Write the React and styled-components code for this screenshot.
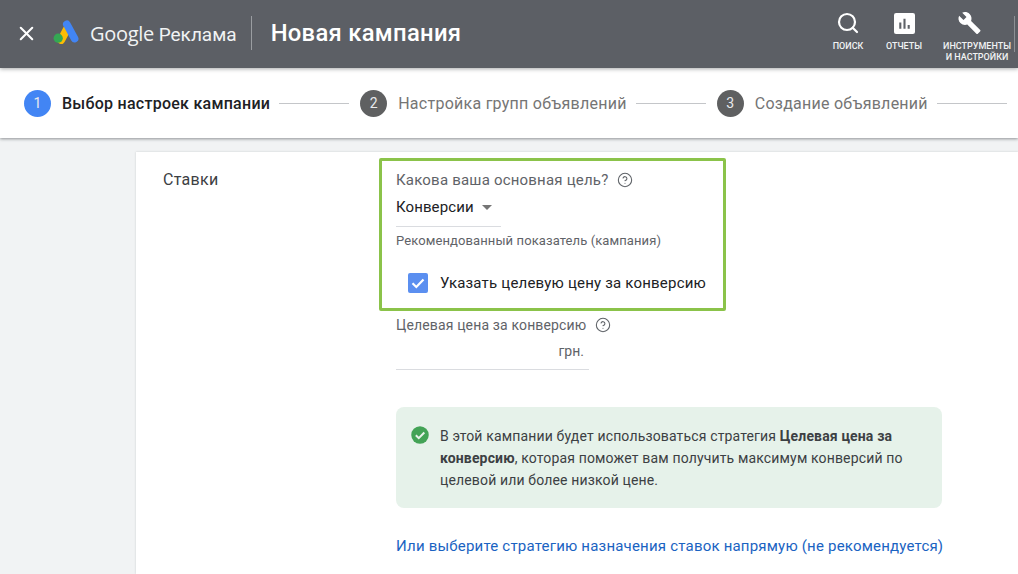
import React from "react";
import styled, { createGlobalStyle } from "styled-components";
import { X, Search, HelpCircle } from "lucide-react";

const steps = [
  { n: 1, label: "Выбор настроек кампании", active: true },
  { n: 2, label: "Настройка групп объявлений" },
  { n: 3, label: "Создание объявлений" },
];

function App() {
  return (
    <Page>
      <GlobalStyle />
      <Header>
        <CloseIcon size={23} strokeWidth={2.2} color="#fff" />
        <Logo viewBox="0 0 26 24">
          <path d="M8.200 20 14.500 8" stroke="#fbbc04" strokeWidth="8" strokeLinecap="round" />
          <path d="M13.800 4.300 21.600 18.600" stroke="#4285f4" strokeWidth="7.600" strokeLinecap="round" />
          <circle cx="5.200" cy="18.200" r="4.600" fill="#34a853" />
        </Logo>
        <Brand>
          <BrandGoogle>Google</BrandGoogle> Реклама
        </Brand>
        <HeaderDivider />
        <Title>Новая кампания</Title>
        <HeaderActions>
          <Action $width="44px" $gap="12px">
            <Search size={24} strokeWidth={2.2} color="#fff" />
            <ActionLabel>ПОИСК</ActionLabel>
          </Action>
          <Action $width="46px" $gap="11px">
            <ReportIcon viewBox="0 0 20 20">
              <rect width="20" height="20" rx="2" fill="#fff" />
              <path d="M5 9h2v6H5zM9 5.500h2V15H9zM13 11.500h2V15h-2z" fill="#5f6368" />
            </ReportIcon>
            <ActionLabel>ОТЧЕТЫ</ActionLabel>
          </Action>
          <Action $width="70px" $gap="15px">
            <WrenchIcon viewBox="0 0 24 24">
              <path
                d="M22.700 19 13.600 9.900c.9-2.300.4-5-1.500-6.900-2-2-5-2.400-7.400-1.300L9 6 6 9 1.600 4.700C.4 7.100.9 10.100 2.900 12.100c1.900 1.900 4.600 2.400 6.900 1.500l9.100 9.100c.4.400 1 .4 1.400 0l2.300-2.300c.5-.4.5-1.100.1-1.400z"
                fill="#fff"
              />
            </WrenchIcon>
            <ActionLabel>
              ИНСТРУМЕНТЫ
              <br />И НАСТРОЙКИ
            </ActionLabel>
          </Action>
          <ActionsEdge />
        </HeaderActions>
      </Header>

      <Stepper>
        {steps.map((step) => (
          <Step key={step.n}>
            <StepNumber $active={step.active}>{step.n}</StepNumber>
            <StepLabel $active={step.active}>{step.label}</StepLabel>
            <StepLine />
          </Step>
        ))}
      </Stepper>

      <Content>
        <Card>
          <SectionName>Ставки</SectionName>
          <FormColumn>
            <Highlight>
              <FieldLabel>
                Какова ваша основная цель?
                <HelpIcon size={16} strokeWidth={1.6} />
              </FieldLabel>
              <Select>
                Конверсии
                <Caret />
              </Select>
              <Hint>Рекомендованный показатель (кампания)</Hint>
              <CheckRow>
                <CheckBox>
                  <svg viewBox="0 0 20 20" width="20" height="20">
                    <path d="M4.500 10.300 8.300 14 15.500 6.500" fill="none" stroke="#fff" strokeWidth="2.200" />
                  </svg>
                </CheckBox>
                Указать целевую цену за конверсию
              </CheckRow>
            </Highlight>

            <Indented>
              <TargetLabel>
                Целевая цена за конверсию
                <HelpIcon size={16} strokeWidth={1.6} />
              </TargetLabel>
              <PriceInput>грн.</PriceInput>
              <Notice>
                <NoticeIcon viewBox="0 0 24 24">
                  <circle cx="12" cy="12" r="10.500" fill="#43a356" />
                  <path d="M7 12.300 10.500 15.800 17.200 9" fill="none" stroke="#e8f2ea" strokeWidth="2.400" />
                </NoticeIcon>
                <NoticeText>
                  В этой кампании будет использоваться стратегия <b>Целевая цена за конверсию</b>, которая поможет вам
                  получить максимум конверсий по целевой или более низкой цене.
                </NoticeText>
              </Notice>
              <StrategyLink>Или выберите стратегию назначения ставок напрямую (не рекомендуется)</StrategyLink>
            </Indented>
          </FormColumn>
        </Card>
      </Content>
    </Page>
  );
}

export default App;

const GlobalStyle = createGlobalStyle`
  html, body {
    margin: 0;
    padding: 0;
    height: 100%;
    overflow: hidden;
  }
  body {
    font-family: Roboto, "Liberation Sans", sans-serif;
    background: #f1f3f4;
  }
`;

const Page = styled.div`
  width: 1018px;
  height: 574px;
  overflow: hidden;
  display: flex;
  flex-direction: column;
  background: #f1f3f4;
`;

const Header = styled.header`
  height: 68px;
  box-sizing: border-box;
  padding: 0 0 2px 15px;
  flex: none;
  display: flex;
  align-items: center;
  background: #5c5f65;
  color: #fff;
  position: relative;
  z-index: 2;
  box-shadow: 0 1px 4px rgba(60, 64, 67, 0.45);
`;

const CloseIcon = styled(X)`
  flex: none;
`;

const Logo = styled.svg`
  width: 26px;
  height: 24px;
  margin: -2px 0 0 15px;
  flex: none;
`;

const Brand = styled.div`
  margin-left: 11px;
  font-size: 19px;
  color: #f1f3f4;
  white-space: nowrap;
`;

const BrandGoogle = styled.span`
  font-family: "Open Sans", sans-serif;
  font-size: 20px;
  letter-spacing: -0.3px;
`;

const HeaderDivider = styled.div`
  width: 1px;
  height: 34px;
  margin: 0 19px 0 14px;
  background: #9a9da1;
`;

const Title = styled.h1`
  margin: 0;
  font-size: 23.800px;
  font-weight: 500;
  letter-spacing: 0.3px;
  white-space: nowrap;
`;

const HeaderActions = styled.div`
  margin-left: auto;
  align-self: flex-start;
  display: flex;
  align-items: flex-start;
`;

const Action = styled.div`
  width: ${(p) => p.$width};
  margin-left: ${(p) => p.$gap};
  padding-top: 11px;
  display: flex;
  flex-direction: column;
  align-items: center;
`;

const ReportIcon = styled.svg`
  width: 21px;
  height: 21px;
  margin: 2px 0 1px;
`;

const WrenchIcon = styled.svg`
  width: 27px;
  height: 24px;
  margin-right: 16px;
`;

const ActionLabel = styled.div`
  margin-top: 6px;
  font-size: 9px;
  line-height: 11px;
  font-weight: 500;
  text-align: center;
  color: #f1f3f4;
  white-space: nowrap;
`;

const ActionsEdge = styled.div`
  width: 1px;
  height: 36px;
  margin: 16px 3px 0 2px;
  background: #8d9094;
`;

const Stepper = styled.nav`
  height: 70px;
  flex: none;
  display: flex;
  align-items: center;
  padding-left: 24px;
  background: #fff;
  position: relative;
  z-index: 1;
  box-shadow: 0 1px 3px rgba(60, 64, 67, 0.55);
`;

const Step = styled.div`
  display: flex;
  align-items: center;
  margin-right: 11px;
`;

const StepNumber = styled.div`
  width: 27px;
  height: 27px;
  border-radius: 50%;
  display: flex;
  align-items: center;
  justify-content: center;
  font-size: 14px;
  color: #e8eaed;
  background: ${(p) => (p.$active ? "#4285f4" : "#5f6061")};
`;

const StepLabel = styled.div`
  margin-left: 11px;
  font-size: 16px;
  letter-spacing: 0.26px;
  white-space: nowrap;
  font-weight: ${(p) => (p.$active ? 500 : 400)};
  color: ${(p) => (p.$active ? "#202124" : "#757575")};
`;

const StepLine = styled.div`
  width: 70px;
  height: 1px;
  margin-left: 9px;
  background: #c4c6c9;
`;

const Content = styled.main`
  flex: 1;
  min-height: 0;
  padding: 14px 0 0 136px;
`;

const Card = styled.section`
  height: 100%;
  display: grid;
  grid-template-columns: 243px 1fr;
  align-items: start;
  background: #fff;
  box-shadow: 0 0 2px rgba(60, 64, 67, 0.2);
`;

const SectionName = styled.div`
  padding: 18px 0 0 27px;
  font-size: 16px;
  letter-spacing: 0.3px;
  color: #3c4043;
`;

const FormColumn = styled.div`
  padding-top: 6px;
`;

const Highlight = styled.div`
  width: 347px;
  height: 153px;
  box-sizing: border-box;
  border: 3px solid #8bc34a;
  border-radius: 2px;
  padding: 9px 0 0 14px;
`;

const FieldLabel = styled.div`
  display: flex;
  align-items: center;
  gap: 9px;
  font-size: 15px;
  line-height: 20px;
  letter-spacing: 0.2px;
  color: #5f6368;
`;

const HelpIcon = styled(HelpCircle)`
  color: #5f6368;
  flex: none;
`;

const Select = styled.div`
  width: 105px;
  height: 34px;
  box-sizing: border-box;
  margin-top: 3px;
  padding-top: 4px;
  display: flex;
  align-items: flex-start;
  gap: 8px;
  font-size: 15px;
  line-height: 20px;
  letter-spacing: 0.1px;
  color: #202124;
  border-bottom: 1px solid #dadce0;
`;

const Caret = styled.span`
  width: 0;
  height: 0;
  margin-top: 8px;
  border-left: 5.500px solid transparent;
  border-right: 5.500px solid transparent;
  border-top: 5.500px solid #757575;
`;

const Hint = styled.div`
  margin-top: 6px;
  font-size: 13px;
  line-height: 16px;
  letter-spacing: 0.1px;
  color: #5f6368;
`;

const CheckRow = styled.div`
  margin-top: 24px;
  padding-left: 12px;
  display: flex;
  align-items: center;
  gap: 12px;
  font-size: 15px;
  line-height: 20px;
  letter-spacing: 0.2px;
  color: #202124;
  white-space: nowrap;
`;

const CheckBox = styled.span`
  width: 20px;
  height: 20px;
  border-radius: 2px;
  flex: none;
  background: #5b8ff0;
`;

const Indented = styled.div`
  padding-left: 17px;
`;

const TargetLabel = styled(FieldLabel)`
  margin-top: 4px;
  font-size: 14px;
  letter-spacing: 0.15px;
`;

const PriceInput = styled.div`
  width: 193px;
  height: 35px;
  box-sizing: border-box;
  padding: 7px 5px 0 0;
  text-align: right;
  font-size: 14px;
  line-height: 18px;
  color: #5f6368;
  border-bottom: 1px solid #dadce0;
`;

const Notice = styled.div`
  width: 546px;
  height: 101px;
  box-sizing: border-box;
  margin-top: 37px;
  padding: 18px 20px 0 14px;
  display: flex;
  gap: 10px;
  border-radius: 8px;
  background: #e6f2ea;
`;

const NoticeIcon = styled.svg`
  width: 20px;
  height: 20px;
  flex: none;
`;

const NoticeText = styled.div`
  font-size: 14px;
  line-height: 22px;
  letter-spacing: 0.15px;
  color: #3c4043;
`;

const StrategyLink = styled.a`
  display: block;
  margin-top: 28px;
  font-size: 15px;
  line-height: 20px;
  letter-spacing: 0.2px;
  white-space: nowrap;
  color: #1a63c2;
`;
